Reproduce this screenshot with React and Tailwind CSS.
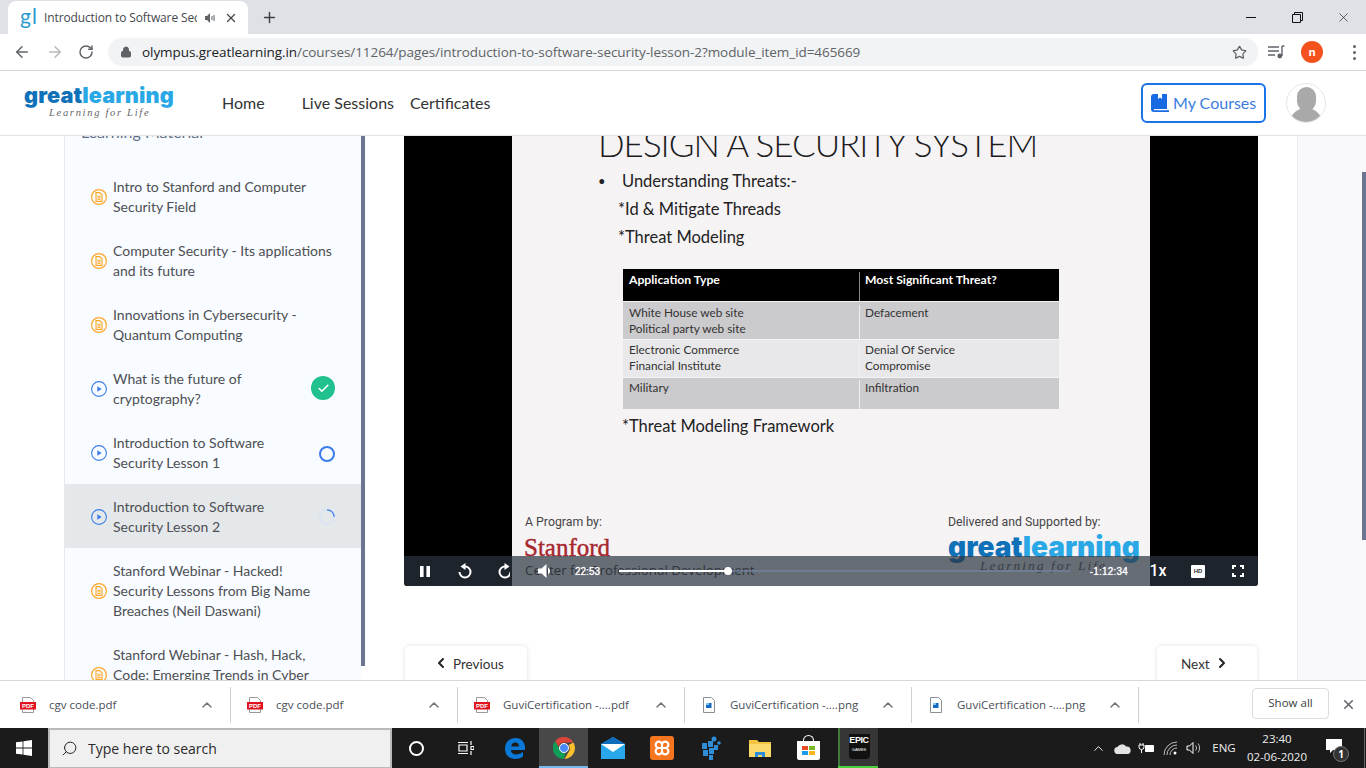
import {
  ArrowLeft,
  ArrowRight,
  RotateCw,
  Lock,
  Star,
  Plus,
  X,
  ChevronUp,
  ChevronLeft,
  ChevronRight,
  Check,
  Search,
} from "lucide-react";

const lessons = [
  { lines: ["Intro to Stanford and Computer", "Security Field"], kind: "doc" },
  { lines: ["Computer Security - Its applications", "and its future"], kind: "doc" },
  { lines: ["Innovations in Cybersecurity -", "Quantum Computing"], kind: "doc" },
  { lines: ["What is the future of", "cryptography?"], kind: "play", status: "done" },
  { lines: ["Introduction to Software", "Security Lesson 1"], kind: "play", status: "ring" },
  { lines: ["Introduction to Software", "Security Lesson 2"], kind: "play", status: "spin", active: true },
  { lines: ["Stanford Webinar - Hacked!", "Security Lessons from Big Name", "Breaches (Neil Daswani)"], kind: "doc" },
  { lines: ["Stanford Webinar - Hash, Hack,", "Code: Emerging Trends in Cyber", "Security"], kind: "doc" },
];

const downloads = [
  { name: "cgv code.pdf", type: "pdf" },
  { name: "cgv code.pdf", type: "pdf" },
  { name: "GuviCertification -....pdf", type: "pdf" },
  { name: "GuviCertification -....png", type: "png" },
  { name: "GuviCertification -....png", type: "png" },
];

const threats = [
  { left: ["White House web site", "Political party web site"], right: ["Defacement"], bg: "bg-[#cbcacc]", h: "h-[37px] pt-[3px]" },
  { left: ["Electronic Commerce", "Financial Institute"], right: ["Denial Of Service", "Compromise"], bg: "bg-[#e8e7e9]", h: "h-[37px] pt-[2px]" },
  { left: ["Military"], right: ["Infiltration"], bg: "bg-[#cbcacc]", h: "h-[31px] pt-[2px]" },
];

const DocIcon = () => (
  <svg width="16" height="16" viewBox="0 0 16 16" fill="none" className="shrink-0">
    <circle cx="8" cy="8" r="7.4" stroke="#ffa726" strokeWidth="1.2" />
    <path d="M5 3.600h3.800l2.200 2.200v6.600H5z" stroke="#ffa726" strokeWidth="1.1" />
    <path d="M6.400 7.200h3.200M6.400 8.800h3.200M6.400 10.400h3.200" stroke="#ffa726" strokeWidth="1" />
  </svg>
);

const PlayIcon = () => (
  <svg width="16" height="16" viewBox="0 0 16 16" fill="none" className="shrink-0">
    <circle cx="8" cy="8" r="7.4" stroke="#3b7de8" strokeWidth="1.1" />
    <path d="M6.300 5.200l4.400 2.800-4.400 2.800z" fill="#3b7de8" />
  </svg>
);

const Status = ({ status }) => {
  if (status === "done")
    return (
      <div className="w-6 h-6 rounded-full bg-[#20c18f] flex items-center justify-center shrink-0 -mt-[2px]">
        <Check size={13} color="#fff" strokeWidth={3} />
      </div>
    );
  if (status === "ring")
    return <div className="w-4 h-4 rounded-full border-2 border-[#3b7de8] shrink-0 mt-px" />;
  if (status === "spin")
    return (
      <svg width="16" height="16" viewBox="0 0 16 16" fill="none" className="shrink-0">
        <circle cx="8" cy="8" r="7.2" stroke="#d5e2f5" strokeWidth="1.2" />
        <path d="M8 .8A7.200 7.200 0 0 1 15.200 8" stroke="#3b7de8" strokeWidth="1.2" />
      </svg>
    );
  return null;
};

const Sidebar = () => (
  <div className="w-[301px] flex shrink-0 shadow-[2px_0_4px_rgba(0,0,0,0.05)] font-['Lato',sans-serif]">
    <div className="w-[297px] bg-[#f8fbff] border-l border-[#e6e8ec]">
      <div className="-mt-[14px] h-[42px] pl-[16px] flex justify-between pr-[26px]">
        <span className="text-[16px] leading-[20px] text-[#5f6d86]">Learning Material</span>
        <ChevronUp size={12} color="#a0a7b3" className="mt-[6px]" />
      </div>
      {lessons.map((l, i) => (
        <div
          key={i}
          className={`flex items-center pl-[26px] pr-[26px] pt-[2px] ${l.lines.length === 3 ? "h-[84px]" : "h-[64px]"} ${l.active ? "bg-[#e5e8eb]" : ""}`}
        >
          {l.kind === "doc" ? <DocIcon /> : <PlayIcon />}
          <div className="ml-[6px] flex-1 text-[14px] leading-[20px] text-[#4d4f53] whitespace-nowrap">
            {l.lines.map((t) => (
              <div key={t}>{t}</div>
            ))}
          </div>
          <Status status={l.status} />
        </div>
      ))}
    </div>
    <div className="w-1 h-[530px] bg-[#6b7590]" />
  </div>
);

const TabStrip = () => (
  <div className="h-[34px] bg-[#dee1e6] flex items-end pl-2 shrink-0">
    <div className="w-[240px] h-[33px] bg-white rounded-t-lg flex items-center pl-3 pr-2 font-['Open_Sans',sans-serif]">
      <span className="w-[16px] text-[21px] leading-[20px] text-[#2b9ad1] font-['Lato',sans-serif] tracking-[1px] -mt-1">gl</span>
      <span className="ml-2 w-[153px] overflow-hidden whitespace-nowrap text-[12px] tracking-[-0.12px] text-[#45484c]">
        Introduction to Software Security
      </span>
      <svg width="12" height="12" viewBox="0 0 12 12" className="ml-[7px]">
        <path d="M1 4h2l3-3v10L3 8H1z" fill="#5f6368" />
        <path d="M8 4v4M10 3v6" stroke="#5f6368" />
      </svg>
      <X size={14} color="#45484c" strokeWidth={2.2} className="ml-[8px]" />
    </div>
    <Plus size={17} color="#3c4043" strokeWidth={2} className="ml-[13px] mb-[8px]" />
    <div className="ml-auto h-[34px] flex items-center">
      <div className="w-[46px] flex justify-center">
        <div className="w-[10px] h-px bg-[#111]" />
      </div>
      <div className="w-[46px] flex justify-center">
        <svg width="11" height="11" viewBox="0 0 11 11" fill="none" stroke="#111">
          <path d="M.5 2.500h8v8h-8zM2.500 2.500v-2h8v8h-2" />
        </svg>
      </div>
      <div className="w-[46px] flex justify-center">
        <X size={15} color="#111" strokeWidth={1} />
      </div>
    </div>
  </div>
);

const Toolbar = () => (
  <div className="h-[37px] bg-white border-b border-[#d8d8d8] flex items-center shrink-0">
    <div className="w-[44px] flex justify-center">
      <ArrowLeft size={18} color="#5f6368" strokeWidth={2} />
    </div>
    <div className="w-[22px] flex justify-center">
      <ArrowRight size={18} color="#b8babd" strokeWidth={2} />
    </div>
    <div className="w-[40px] flex justify-center">
      <RotateCw size={16} color="#5f6368" strokeWidth={2.2} />
    </div>
    <div className="ml-[2px] w-[1150px] h-[28px] rounded-full bg-[#f1f3f4] flex items-center pl-[12px] pr-[11px]">
      <Lock size={12} color="#5f6368" fill="#5f6368" strokeWidth={2} />
      <span className="ml-[10px] text-[13.5px] text-[#5f6368] whitespace-nowrap font-['Open_Sans',sans-serif] tracking-[-0.065px]">
        <span className="text-[#202124]">olympus.greatlearning.in</span>
        /courses/11264/pages/introduction-to-software-security-lesson-2?module_item_id=465669
      </span>
      <Star size={15} color="#5f6368" strokeWidth={2} className="ml-auto" />
    </div>
    <div className="ml-[10px] w-[20px]">
      <svg width="17" height="14" viewBox="0 0 17 14" fill="none">
        <path d="M0 2h11M0 6h11M0 10h7" stroke="#5f6368" strokeWidth="1.3" />
        <path d="M14 1v10" stroke="#5f6368" strokeWidth="1.4" />
        <path d="M14 1h2.500" stroke="#5f6368" strokeWidth="1.4" />
        <circle cx="11.800" cy="11" r="2.400" fill="#5f6368" />
      </svg>
    </div>
    <div className="ml-[13px] w-[22px] h-[22px] rounded-full bg-[#f4511e] text-white text-[11px] font-bold flex items-center justify-center font-['Open_Sans',sans-serif]">
      n
    </div>
    <div className="ml-[30px] flex flex-col gap-[3px]">
      <div className="w-[3px] h-[3px] rounded-full bg-[#5f6368]" />
      <div className="w-[3px] h-[3px] rounded-full bg-[#5f6368]" />
      <div className="w-[3px] h-[3px] rounded-full bg-[#5f6368]" />
    </div>
  </div>
);

const Logo = () => (
  <div className="w-[150px] font-['Inter',sans-serif]">
    <div className="text-[21.700px] leading-[24px] font-black tracking-[0.1px] whitespace-nowrap">
      <span className="text-[#0f72b8]">great</span>
      <span className="text-[#2aa8e6]">learning</span>
    </div>
    <div className="pl-[25px] text-[10.5px] leading-[11px] italic tracking-[1.7px] text-[#666] whitespace-nowrap font-['Liberation_Serif',serif]">
      Learning for Life
    </div>
  </div>
);

const NavBar = () => (
  <div className="h-[65px] bg-white border-b border-[#e2e4e8] flex items-center pl-6 shrink-0 font-['Lato',sans-serif] text-[16px] text-[#333]">
    <div className="-mt-[6px]">
      <Logo />
    </div>
    <span className="ml-[48px]">Home</span>
    <span className="ml-[37px]">Live Sessions</span>
    <span className="ml-[16px]">Certificates</span>
    <div className="ml-auto mr-[20px] w-[125px] h-[40px] border-2 border-[#1a73e8] rounded-md flex items-center pl-[8px] text-[#3a7de0]">
      <svg width="18" height="18" viewBox="0 0 18 18" className="shrink-0">
        <path d="M3 0h4v5l2-1.500L11 5V0h5a2 2 0 0 1 0 0v15H3a1.500 1.500 0 0 0 0 1.200h15V18H3a3 3 0 0 1-3-3V3a3 3 0 0 1 3-3z" fill="#1a6ae4" />
      </svg>
      <span className="ml-[4px]">My Courses</span>
    </div>
    <div className="w-[40px] h-[40px] mr-[40px] rounded-full border border-[#e6e6e6] overflow-hidden flex flex-col items-center bg-white">
      <div className="w-[19px] h-[24px] mt-[3px] rounded-full bg-[#a9a9a9] shrink-0" />
      <div className="w-[34px] h-[20px] -mt-[3px] rounded-t-full bg-[#a9a9a9] shrink-0" />
    </div>
  </div>
);

const Slide = () => (
  <div className="w-[638px] h-[450px] bg-[#f6f3f5] overflow-hidden flex flex-col font-['Lato',sans-serif] text-[#222]">
    <div className="-mt-[15px] pl-[86px] text-[35px] leading-[44px] font-light whitespace-nowrap tracking-[-1px] text-[#1c1c1e]">
      DESIGN A SECURITY SYSTEM
    </div>
    <div className="pl-[86px] mt-[7px] text-[16.5px] leading-[18px] flex">
      <span className="w-[24px] text-[13px]">•</span>
      <span>Understanding Threats:-</span>
    </div>
    <div className="pl-[106px] mt-[10px] text-[16.5px] leading-[18px]">*Id &amp; Mitigate Threads</div>
    <div className="pl-[106px] mt-[10px] text-[16.5px] leading-[18px]">*Threat Modeling</div>
    <div className="ml-[111px] mt-[23px] w-[436px] text-[11.8px] leading-[16px] text-[#333]">
      <div className="h-[32px] bg-black text-white text-[12.2px] font-bold grid grid-cols-[237px_199px] pt-[3px]">
        <span className="pl-[6px] border-r border-[#888] h-[29px]">Application Type</span>
        <span className="pl-[5px]">Most Significant Threat?</span>
      </div>
      {threats.map((r, i) => (
        <div key={i} className={`${r.bg} ${r.h} mt-px grid grid-cols-[237px_199px]`}>
          <div className="pl-[6px] border-r border-[#efeff0]">
            {r.left.map((t) => (
              <div key={t}>{t}</div>
            ))}
          </div>
          <div className="pl-[5px]">
            {r.right.map((t) => (
              <div key={t}>{t}</div>
            ))}
          </div>
        </div>
      ))}
    </div>
    <div className="pl-[110px] mt-[8px] text-[16.5px] leading-[18px]">*Threat Modeling Framework</div>
    <div className="mt-[80px] px-[13px] flex justify-between">
      <div>
        <div className="text-[12.3px] leading-[14px] text-[#444] font-['Roboto',sans-serif]">A Program by:</div>
        <div className="mt-[5px] -ml-px text-[25px] leading-[28px] text-[#a6272d] font-['Liberation_Serif',serif] [-webkit-text-stroke:0.4px_#a6272d]">Stanford</div>
        <div className="text-[13.3px] leading-[16px] text-[#333] font-['Open_Sans',sans-serif] whitespace-nowrap">Center for Professional Development</div>
      </div>
      <div className="w-[192px] -mr-[3px]">
        <div className="text-[12.3px] leading-[14px] text-[#444] font-['Roboto',sans-serif] whitespace-nowrap">Delivered and Supported by:</div>
        <div className="mt-[3px] text-[28px] leading-[30px] font-black whitespace-nowrap font-['Inter',sans-serif]">
          <span className="text-[#0f72b8]">great</span>
          <span className="text-[#2aa8e6]">learning</span>
        </div>
        <div className="pl-[32px] -mt-[3px] text-[13.5px] leading-[14px] italic tracking-[2px] text-[#555] whitespace-nowrap font-['Liberation_Serif',serif]">Learning for Life</div>
      </div>
    </div>
  </div>
);

const CtrlSlot = ({ children }) => (
  <div className="w-[40px] h-[30px] flex items-center justify-center shrink-0">{children}</div>
);

const Controls = () => (
  <div className="absolute left-0 right-0 bottom-0 h-[30px] bg-[rgba(43,51,63,0.7)] flex items-center pl-px rounded-b-[3px] text-white font-['Liberation_Sans',sans-serif]">
    <CtrlSlot>
      <svg width="10" height="11" viewBox="0 0 10 11" fill="#fff">
        <path d="M0 0h3.600v11H0zM6.400 0H10v11H6.400z" />
      </svg>
    </CtrlSlot>
    <CtrlSlot>
      <svg width="14" height="16" viewBox="0 0 14 16" fill="none">
        <path d="M7 3.500a5.500 5.500 0 1 1-5.500 5.500" stroke="#fff" strokeWidth="2" />
        <path d="M7.500 0L2.500 3.500l5 3.500z" fill="#fff" />
      </svg>
    </CtrlSlot>
    <CtrlSlot>
      {/* the slide edge cuts this icon in the reference */}
      <div className="w-[14px] h-[16px] overflow-hidden mr-[4px]">
        <svg width="16" height="16" viewBox="0 0 16 16" fill="none">
          <path d="M9 3.500a5.500 5.500 0 1 0 5.500 5.500" stroke="#fff" strokeWidth="2" />
          <path d="M8.500 0l5 3.500-5 3.500z" fill="#fff" />
        </svg>
      </div>
    </CtrlSlot>
    <CtrlSlot>
      <svg width="15" height="14" viewBox="0 0 15 14" fill="#fff">
        <path d="M0 4.500h3.500L8.500 0v14l-5-4.500H0z" />
        <path d="M10 3.500a4 4 0 0 1 0 7z" />
      </svg>
    </CtrlSlot>
    <span className="ml-[10px] text-[10px] w-[25px] [text-shadow:0_0_1px_#fff]">22:53</span>
    <div className="ml-[19px] w-[451px] h-[2px] bg-[rgba(115,133,159,0.7)] relative">
      <div className="w-[109px] h-[2px] bg-white" />
      <div className="absolute left-[105px] -top-[3px] w-2 h-2 rounded-full bg-white" />
    </div>
    <span className="ml-auto mr-[10px] text-[10px] tracking-[0.2px] [text-shadow:0_0_1px_#fff]">-1:12:34</span>
    <CtrlSlot>
      <span className="text-[16px] font-medium font-['Roboto',sans-serif]">1x</span>
    </CtrlSlot>
    <CtrlSlot>
      <div className="w-[14px] h-[13px] bg-white rounded-[1px] text-[6px] leading-[13px] font-bold text-[#333] text-center">HD</div>
    </CtrlSlot>
    <CtrlSlot>
      <svg width="12" height="12" viewBox="0 0 12 12" fill="none" stroke="#fff" strokeWidth="2">
        <path d="M1 4V1h3M8 1h3v3M11 8v3H8M4 11H1V8" />
      </svg>
    </CtrlSlot>
  </div>
);

const Main = () => (
  <div className="w-[932px] pl-[39px] bg-white shrink-0 font-['Lato',sans-serif]">
    <div className="relative w-[854px] h-[450px] bg-black flex justify-center rounded-b-[3px] overflow-hidden">
      <Slide />
      <Controls />
    </div>
    <div className="mt-[60px] w-[852px] ml-px flex justify-between text-[13.5px] text-[#333]">
      <div className="w-[122px] h-[60px] rounded-t-[4px] bg-white shadow-[0_0_5px_rgba(0,0,0,0.12)] flex items-start pt-[8px] pl-[28px] gap-[4px]">
        <ChevronLeft size={16} color="#222" strokeWidth={3} className="mt-px" />
        <span>Previous</span>
      </div>
      <div className="w-[100px] h-[60px] rounded-t-[4px] bg-white shadow-[0_0_5px_rgba(0,0,0,0.12)] flex items-start pt-[8px] pl-[24px] gap-[4px]">
        <span>Next</span>
        <ChevronRight size={16} color="#222" strokeWidth={3} className="mt-px" />
      </div>
    </div>
  </div>
);

const FileIcon = ({ type }) =>
  type === "pdf" ? (
    <svg width="16" height="16" viewBox="0 0 16 16" className="shrink-0">
      <path d="M2.500.5h8l3 3v12h-11z" fill="#fff" stroke="#999" />
      <rect x="0" y="5" width="16" height="7.500" fill="#e0131f" />
      <text x="8" y="11" fontSize="6" fontWeight="700" fill="#fff" textAnchor="middle" fontFamily="Liberation Sans">PDF</text>
    </svg>
  ) : (
    <svg width="16" height="16" viewBox="0 0 16 16" className="shrink-0">
      <path d="M2.500.5h8l3 3v12h-11z" fill="#fff" stroke="#8a8f96" />
      <rect x="5" y="6" width="5.500" height="5" fill="#1769c2" />
      <rect x="5" y="6" width="3" height="2" fill="#7cc4f0" />
    </svg>
  );

const DownloadBar = () => (
  <div className="h-[48px] bg-white border-t border-[#d8d8d8] flex items-center pl-1 shrink-0 font-['Open_Sans',sans-serif] text-[11.5px] text-[#4a4f57]">
    {downloads.map((d, i) => (
      <div key={i} className="w-[227px] h-[36px] flex items-center pl-[16px] shrink-0 border-r border-[#d0d0d0]">
        <FileIcon type={d.type} />
        <span className="ml-[13px] flex-1 whitespace-nowrap">{d.name}</span>
        <ChevronUp size={16} color="#6f7276" strokeWidth={2.2} className="mr-[15px]" />
      </div>
    ))}
    <div className="ml-auto w-[77px] h-[31px] -mt-[3px] border border-[#dadce0] rounded-[4px] flex items-center justify-center text-[#3c4043]">
      Show all
    </div>
    <X size={15} color="#5f6368" strokeWidth={2.4} className="ml-[12px] mr-[10px]" />
  </div>
);

const TaskSlot = ({ children, className = "" }) => (
  <div className={`w-[49px] h-[40px] flex items-center justify-center shrink-0 ${className}`}>{children}</div>
);

const Taskbar = () => (
  <div className="h-[40px] bg-[#1b1b1b] flex items-center shrink-0 relative font-['Open_Sans',sans-serif]">
    <div className="w-[48px] flex justify-center">
      <svg width="16" height="16" viewBox="0 0 16 16" fill="#fff">
        <path d="M0 2.300l6.600-.9v6.200H0zM7.400 1.300L16 0v7.600H7.400zM0 8.400h6.600v6.200L0 13.700zM7.400 8.400H16V16l-8.600-1.300z" />
      </svg>
    </div>
    <div className="w-[344px] h-[40px] bg-[#f0f0f0] border-2 border-b-[1px] border-[#b9b9b9] flex items-center pl-[11px] text-[14px] text-[#2b2b2b]">
      <Search size={17} color="#222" strokeWidth={1.4} className="-scale-x-100" />
      <span className="ml-[10px]">Type here to search</span>
    </div>
    <TaskSlot>
      <div className="w-[15px] h-[15px] rounded-full border-[2.5px] border-white" />
    </TaskSlot>
    <TaskSlot>
      <svg width="16" height="16" viewBox="0 0 16 16" fill="none" stroke="#fff" strokeWidth="1.2">
        <path d="M0 2.500h10M0 13.500h10M1 5h8v6H1zM13 1v4M13 6.500h3v3h-3zM13 11v4" />
      </svg>
    </TaskSlot>
    <TaskSlot>
      <svg width="20" height="21" viewBox="0 0 20 21">
        <path d="M10.500 0C4 0 0 4.500 0 11c0 6.500 5 10 10 10 3.500 0 6-1 8-2.500v-4.500c-2 1.500-4.500 2.500-7 2.500-3 0-5-1.700-5-4.500h14V10c0-6-3.500-10-9.500-10zM6.200 8.500C6.500 6 8 4.500 10.300 4.500S14 6 14 8.500z" fill="#0a78d7" />
      </svg>
    </TaskSlot>
    <TaskSlot className="bg-[#484848] relative">
      <svg width="22" height="22" viewBox="0 0 22 22">
        <path d="M11 0a11 11 0 0 1 9.500 5.500H11a5.500 5.500 0 0 0-5.300 4L2.100 4.200A11 11 0 0 1 11 0z" fill="#db4437" />
        <path d="M20.500 5.500A11 11 0 0 1 11.500 22l4.200-7.200A5.500 5.500 0 0 0 15.500 8z" fill="#fbc02d" />
        <path d="M2.100 4.200l4.500 7.800a5.500 5.500 0 0 0 6 4L10.700 22A11 11 0 0 1 2.100 4.200z" fill="#0f9d58" />
        <circle cx="11" cy="11" r="4.500" fill="#4a8af4" stroke="#fff" strokeWidth="1" />
      </svg>
      <div className="absolute left-0 right-0 bottom-0 h-[2px] bg-[#76b9ed]" />
    </TaskSlot>
    <TaskSlot>
      <svg width="24" height="22" viewBox="0 0 24 22">
        <path d="M0 7L12 0l12 7v15H0z" fill="#28a8ea" />
        <path d="M0 7l12-7 12 7z" fill="#0f6cbd" />
        <path d="M0 7h24l-12 8z" fill="#fff" />
      </svg>
    </TaskSlot>
    <TaskSlot>
      <div className="w-6 h-6 rounded-[3px] bg-[#f5761f] flex items-center justify-center">
        <svg width="18" height="18" viewBox="0 0 17 17" fill="none" stroke="#fff" strokeWidth="2">
          <path d="M8.500 5.500V11.500M8.500 5.500a3 3 0 1 0-3 3h6a3 3 0 1 0-3-3M8.500 11.500a3 3 0 1 1-3-3M8.500 11.500a3 3 0 1 0 3-3" />
        </svg>
      </div>
    </TaskSlot>
    <TaskSlot>
      <svg width="21" height="24" viewBox="0 0 21 24" fill="#2f8ed6">
        <path d="M2 7h5v6H2zM8 5h5v6H8zM3 14h5v6H3zM9 12h5v6H9zM9 19h4v5H9zM14 9h4v5h-4z" />
        <circle cx="14" cy="3" r="2.500" />
        <circle cx="19" cy="7" r="1.800" />
      </svg>
    </TaskSlot>
    <TaskSlot>
      <svg width="22" height="18" viewBox="0 0 22 18">
        <path d="M0 1h8l2 2h12v15H0z" fill="#f5c342" />
        <path d="M0 5h22v13H0z" fill="#fbd96b" />
        <path d="M6 18v-5h10v5h-3v-2H9v2z" fill="#2f8dd6" />
      </svg>
    </TaskSlot>
    <TaskSlot>
      <div className="w-[23px] h-[19px] mt-[5px] bg-white rounded-b-[2px] grid grid-cols-2 gap-px p-[5px] relative">
        <div className="bg-[#e74c24]" />
        <div className="bg-[#7cb92a]" />
        <div className="bg-[#1c9ce8]" />
        <div className="bg-[#fbb81e]" />
        <div className="absolute -top-[6px] left-[6px] w-[11px] h-[10px] rounded-t-full border border-white border-b-0" />
      </div>
    </TaskSlot>
    <div className="ml-[5px] w-[40px] h-[40px] bg-[#363636] border-l-2 border-[#3f7a3a] relative flex items-center justify-center">
      <div className="w-[21px] h-[25px] -mt-[3px] bg-[#111] rounded-b-[4px] text-white text-center font-['Liberation_Sans',sans-serif]">
        <div className="text-[9px] leading-[13px] font-bold tracking-[-0.4px]">EPIC</div>
        <div className="text-[4px] leading-[5px]">GAMES</div>
      </div>
      <div className="absolute -left-[2px] right-0 bottom-0 h-[2px] bg-[#4ccf3f]" />
    </div>
    <div className="ml-auto flex items-center text-white">
      <div className="w-6 flex justify-center">
        <ChevronUp size={15} color="#fff" strokeWidth={1.5} />
      </div>
      <div className="w-6 flex justify-center">
        <svg width="17" height="11" viewBox="0 0 17 11" fill="#e4e4e4">
          <path d="M4 11a3.500 3.500 0 0 1-.5-7A5 5 0 0 1 12 3.500 3.800 3.800 0 0 1 13.500 11z" />
        </svg>
      </div>
      <div className="w-6 flex justify-center">
        <svg width="16" height="13" viewBox="0 0 16 13" fill="none" stroke="#fff">
          <path d="M2 1v2M5 1v2M1 3h5v2a2.500 2.500 0 0 1-5 0zM3.500 8v3" />
          <path d="M7.500 3.500h8v6h-8z" fill="#fff" />
        </svg>
      </div>
      <div className="w-6 flex justify-center">
        <svg width="15" height="14" viewBox="0 0 15 14" fill="none" stroke="#bbb">
          <path d="M1 14A13 13 0 0 1 14 1M4 14A10 10 0 0 1 14 4M7 14a7 7 0 0 1 7-7" />
          <circle cx="12" cy="12" r="1.500" fill="#fff" stroke="none" />
        </svg>
      </div>
      <div className="w-[23px] flex justify-center">
        <svg width="16" height="14" viewBox="0 0 16 14" fill="none" stroke="#fff">
          <path d="M1 5h2.500L7 1.500v11L3.500 9H1z" />
          <path d="M9.500 4.500a3.500 3.500 0 0 1 0 5M12 2.500a7 7 0 0 1 0 9" stroke="#bbb" />
        </svg>
      </div>
      <div className="w-[36px] pl-[2px] text-[11.5px] text-center text-[#eee]">ENG</div>
      <div className="ml-[1px] w-[70px] text-[11.5px] leading-[18px] text-center text-[#eee]">
        <div>23:40</div>
        <div>02-06-2020</div>
      </div>
      <div className="ml-[4px] w-[36px] flex justify-center relative h-[40px] items-center">
        <svg width="16" height="15" viewBox="0 0 16 15" fill="#fff" className="-mt-[4px]">
          <path d="M0 0h16v11H7l-3 3v-3H0z" />
        </svg>
        <div className="absolute right-[3px] bottom-[6px] w-[16px] h-[16px] rounded-full bg-[#333] border border-[#777] text-[10px] leading-[14px] font-bold text-center">1</div>
      </div>
      <div className="ml-[12px] mr-[1px] w-px h-[40px] bg-[#666]" />
    </div>
  </div>
);

export default function App() {
  return (
    <div className="w-[1366px] h-[768px] overflow-hidden flex flex-col bg-white">
      <TabStrip />
      <Toolbar />
      <NavBar />
      <div className="h-[544px] flex overflow-hidden shrink-0">
        <div className="w-[64px] bg-white shrink-0" />
        <Sidebar />
        <Main />
        <div className="flex-1 bg-[#f9f9fb] border-l border-[#eeeef0] flex justify-end">
          <div className="w-1 h-[368px] mt-[36px] bg-[#6b7590]" />
        </div>
      </div>
      <DownloadBar />
      <Taskbar />
    </div>
  );
}
